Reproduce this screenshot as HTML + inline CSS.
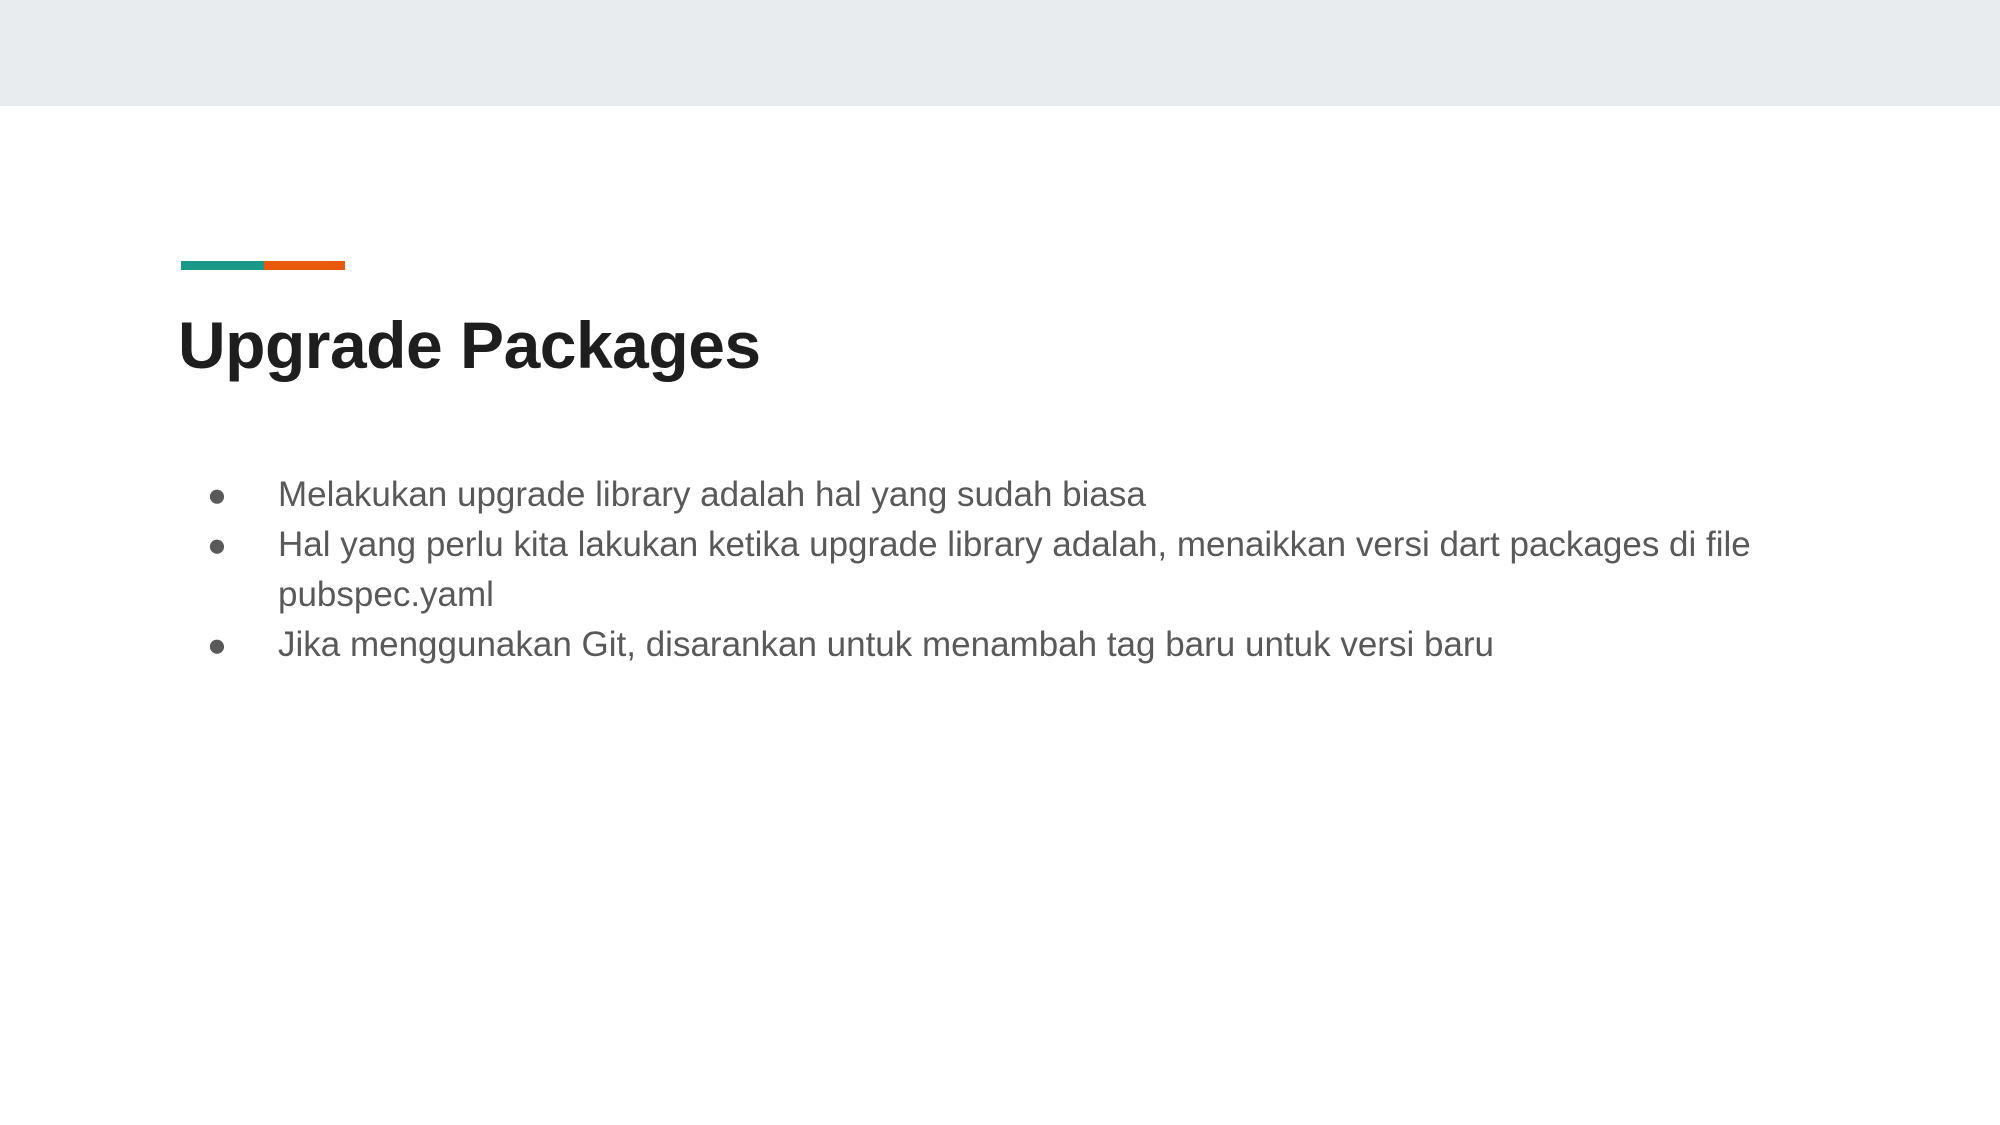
<!DOCTYPE html>
<html><head><meta charset="utf-8"><style>
html,body{margin:0;padding:0;width:2000px;height:1125px;background:#fff;overflow:hidden;position:relative;font-family:"Liberation Sans",sans-serif}
.top{position:absolute;left:0;top:0;width:2000px;height:106px;background:#e8ecee}
.l1{position:absolute;left:181px;top:261px;width:83px;height:9px;background:#1a9988}
.l2{position:absolute;left:264px;top:261px;width:81px;height:9px;background:#e8590c}
h1{position:absolute;left:178px;top:305px;margin:0;font-size:66px;font-weight:bold;color:#1e1e1e;letter-spacing:-0.5px;line-height:80px}
.b{position:absolute;left:0;top:470px;color:#595959;font-size:35px;line-height:50px}
.row{position:relative;padding-left:278px}
.row .d{position:absolute;left:207px;top:0;font-size:33px}
</style></head><body>
<div class="top"></div>
<div class="l1"></div><div class="l2"></div>
<h1>Upgrade Packages</h1>
<div class="b">
<div class="row"><span class="d">●</span>Melakukan upgrade library adalah hal yang sudah biasa</div>
<div class="row"><span class="d">●</span>Hal yang perlu kita lakukan ketika upgrade library adalah, menaikkan versi dart packages di file<br>pubspec.yaml</div>
<div class="row"><span class="d">●</span>Jika menggunakan Git, disarankan untuk menambah tag baru untuk versi baru</div>
</div>
</body></html>
